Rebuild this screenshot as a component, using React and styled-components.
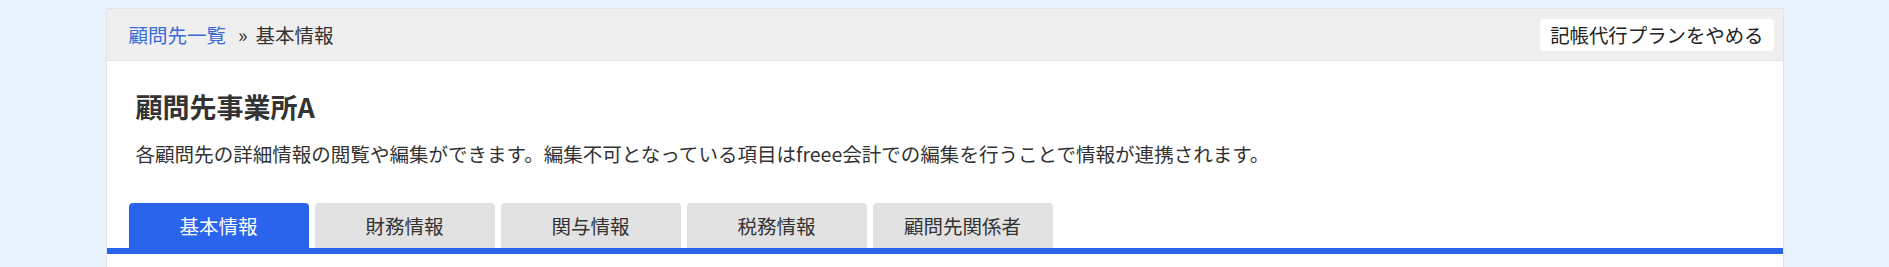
import React from 'react';
import styled, { createGlobalStyle } from 'styled-components';

const GlobalStyle = createGlobalStyle`
    body {
        margin: 0;
        background-color: #eaf2fd;
        font-family: "Noto Sans CJK JP", "Noto Sans", sans-serif;
        color: #333333;
    }
`;

const Page = styled.div`
    padding-top: 8px;
    height: 259px;
    overflow: hidden;
`;

const Card = styled.section`
    width: 1678px;
    margin: 0 auto;
    background-color: #ffffff;
    border: 1px solid #dfe4ea;
    border-bottom: none;
    box-sizing: border-box;
    min-height: 270px;
`;

const Header = styled.div`
    height: 52px;
    box-sizing: border-box;
    display: flex;
    align-items: center;
    justify-content: space-between;
    padding: 0 9px 0 22px;
    background-color: #efefef;
    border-bottom: 1px solid #e2e2e2;
`;

const Breadcrumb = styled.nav`
    display: flex;
    align-items: center;
    font-size: 19.5px;
    line-height: 1;
`;

const Crumb = styled.a`
    color: #3a6bd8;
    text-decoration: none;
`;

const Separator = styled.span`
    margin: 0 8px 0 12px;
    color: #333333;
    font-size: 20px;
`;

const Current = styled.span`
    color: #333333;
`;

const PlainButton = styled.button`
    height: 32px;
    padding: 0 10px;
    font-family: inherit;
    font-size: 19.4px;
    color: #222222;
    background-color: #ffffff;
    border: none;
    border-radius: 4px;
    cursor: pointer;
`;

const Body = styled.div`
    padding-top: 28px;
`;

const Intro = styled.div`
    padding: 0 29px;
`;

const Title = styled.h1`
    margin: 0;
    font-size: 27px;
    line-height: 36px;
    font-weight: 700;
    color: #333333;
`;

const Description = styled.p`
    margin: 15px 0 0;
    font-size: 19.55px;
    line-height: 28px;
    color: #333333;
`;

const TabBar = styled.div`
    margin-top: 35px;
    display: flex;
    gap: 6px;
    padding: 0 22px;
    border-bottom: 6px solid #2a63ec;
`;

const Tab = styled.button`
    width: 180px;
    height: 45px;
    padding: 0;
    font-family: inherit;
    font-size: 19.5px;
    border: none;
    border-radius: 4px 4px 0 0;
    cursor: pointer;
    color: ${(p) => (p.$active ? '#ffffff' : '#333333')};
    background-color: ${(p) => (p.$active ? '#2a63ec' : '#e2e2e2')};
`;

const tabs = ['基本情報', '財務情報', '関与情報', '税務情報', '顧問先関係者'];

export default function App() {
    return (
        <>
            <GlobalStyle />
            <Page>
                <Card>
                    <Header>
                        <Breadcrumb>
                            <Crumb href="#">顧問先一覧</Crumb>
                            <Separator>»</Separator>
                            <Current>基本情報</Current>
                        </Breadcrumb>
                        <PlainButton>記帳代行プランをやめる</PlainButton>
                    </Header>
                    <Body>
                        <Intro>
                            <Title>顧問先事業所A</Title>
                            <Description>
                                各顧問先の詳細情報の閲覧や編集ができます。編集不可となっている項目はfreee会計での編集を行うことで情報が連携されます。
                            </Description>
                        </Intro>
                        <TabBar>
                            {tabs.map((t, i) => (
                                <Tab key={t} $active={i === 0}>{t}</Tab>
                            ))}
                        </TabBar>
                    </Body>
                </Card>
            </Page>
        </>
    );
}
